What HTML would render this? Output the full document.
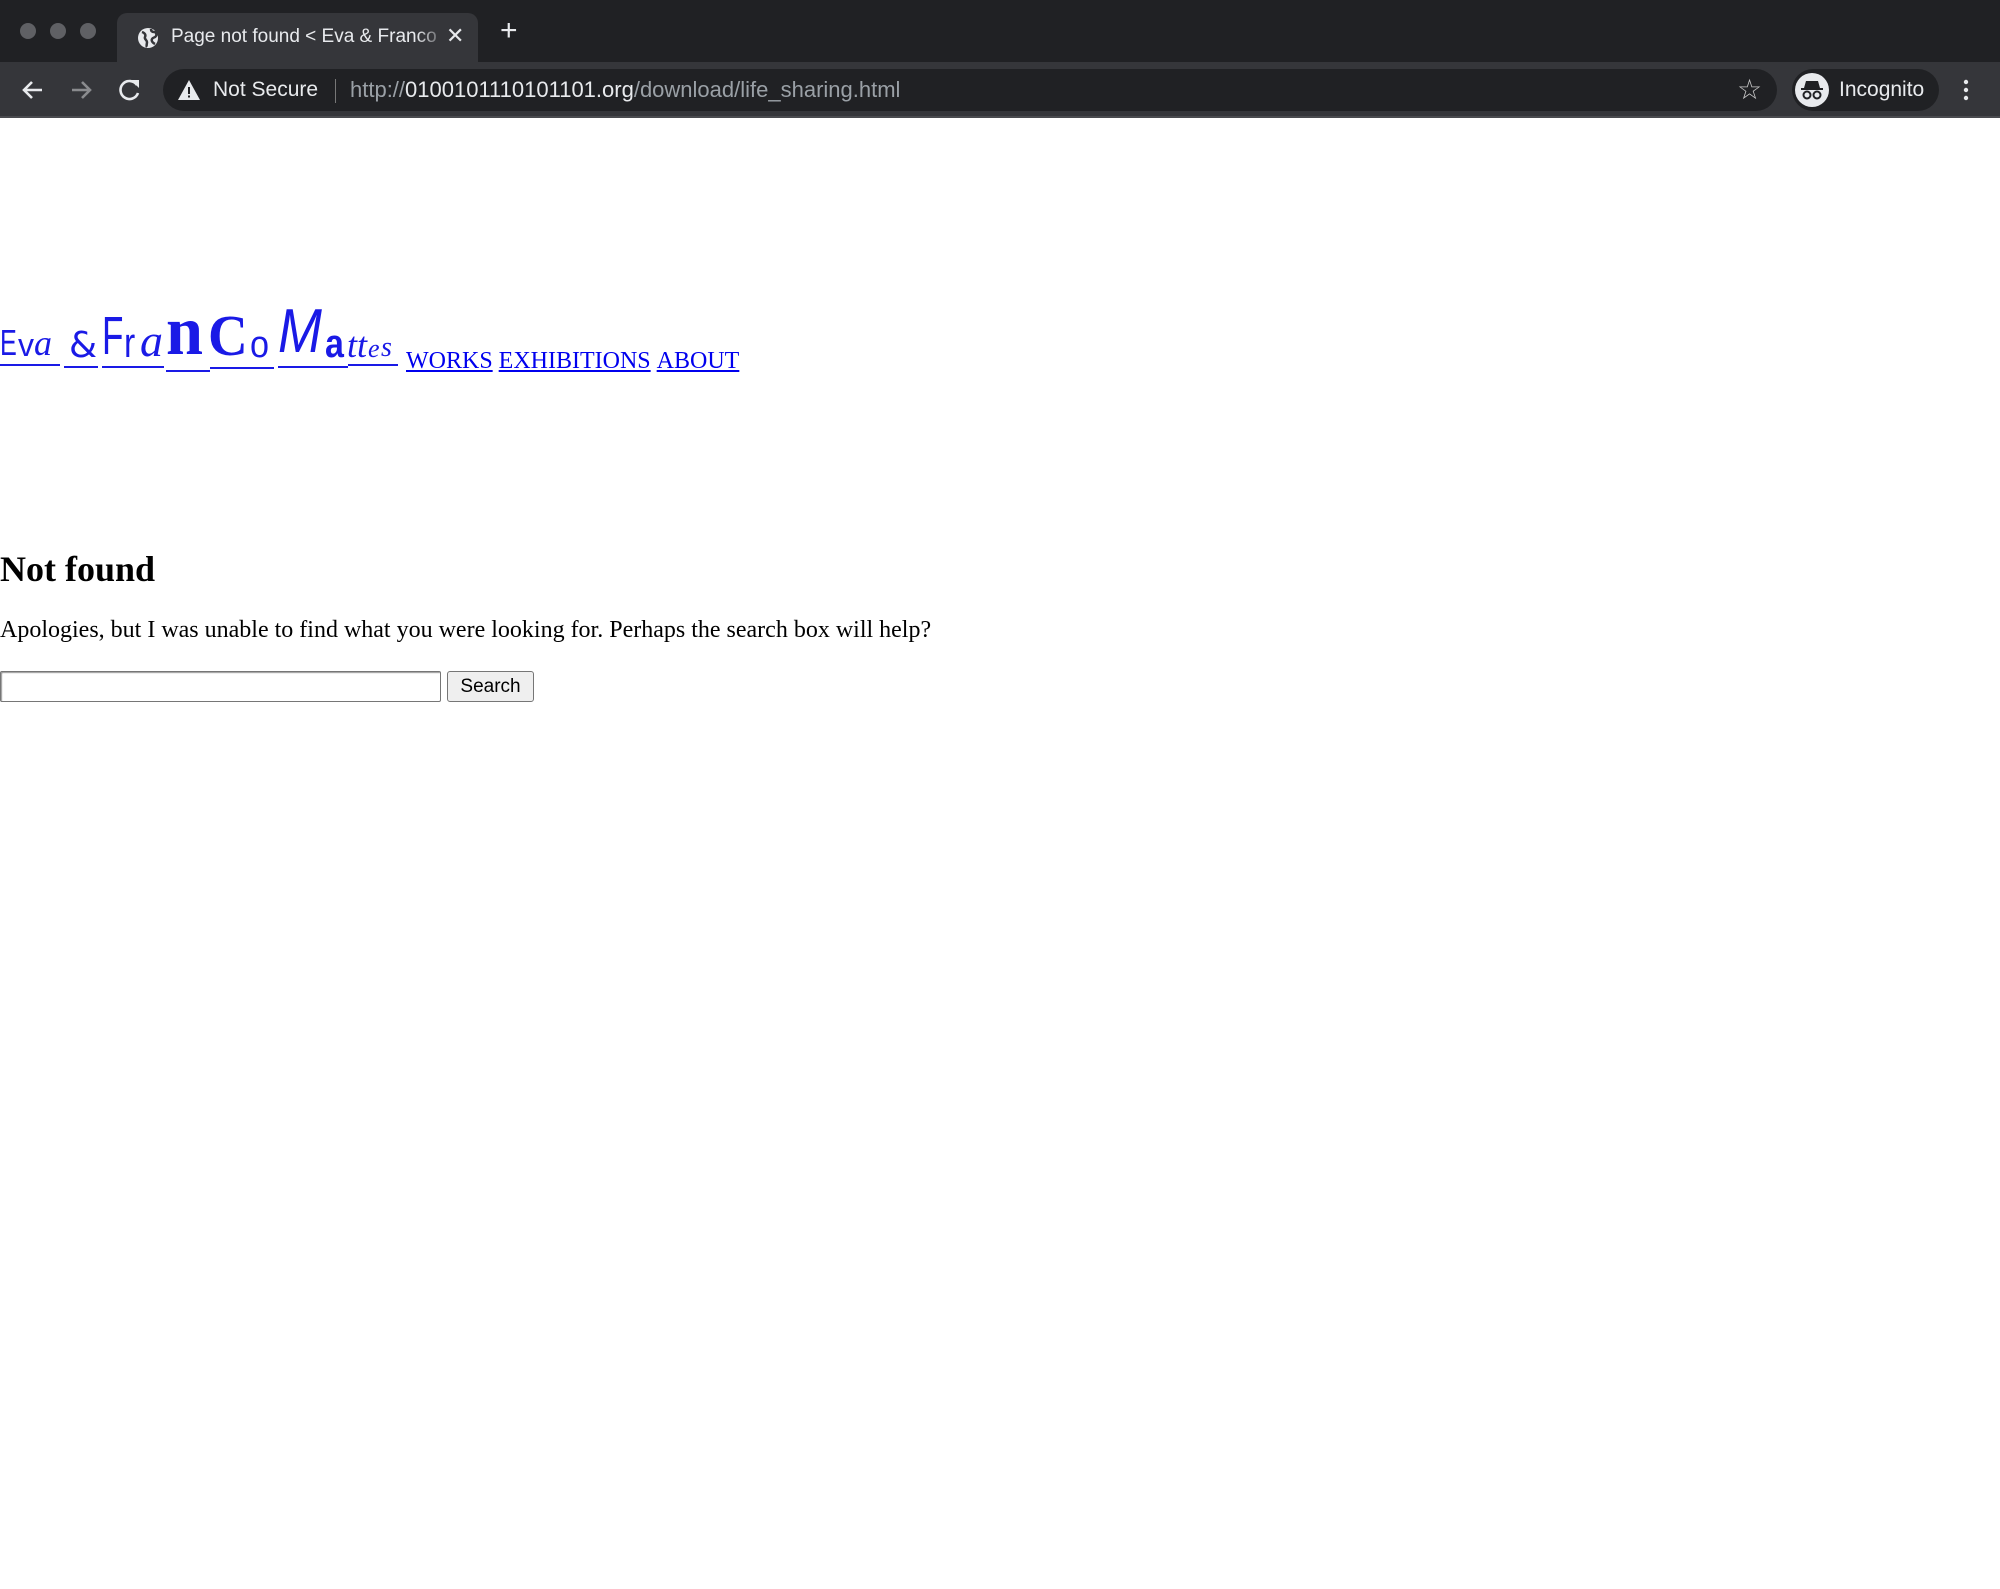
<!DOCTYPE html>
<html><head><meta charset="utf-8"><style>
*{box-sizing:border-box}
body{margin:0;width:2000px;height:1589px;background:#fff;overflow:hidden;font-family:"Liberation Serif",serif;}
.top{position:absolute;left:0;top:0;width:2000px;height:62px;background:#202124}
.tool{position:absolute;left:0;top:62px;width:2000px;height:56px;background:#35363a;border-bottom:2px solid #4a4b4f}
.dot{position:absolute;top:23px;width:16px;height:16px;border-radius:50%;background:#5f6064}
.tab{position:absolute;left:117px;top:13px;width:361px;height:50px;background:#35363a;border-radius:10px 10px 0 0;overflow:hidden}
.tab span{position:absolute;left:54px;top:13px;color:#e8eaed;font:19px "Liberation Sans",sans-serif;white-space:nowrap}
.omni{position:absolute;left:163px;top:7px;width:1614px;height:42px;background:#202124;border-radius:21px}
.ic{position:absolute;color:#e8eaed;font-family:"Liberation Sans",sans-serif}
a{color:#0000ee}
.logo{position:absolute;left:0;top:300px;height:80px;width:400px}
.logo span{position:absolute;bottom:0;line-height:1;color:#1a1ae6;transform-origin:left bottom}
.ul{position:absolute;height:2px;background:#1a1ae6}
.nav{position:absolute;top:348px;left:406px;font-size:24px;white-space:nowrap}
.nav a{margin-right:6px}
h1{position:absolute;left:0;top:548px;margin:0;font-size:36px;font-weight:bold}
p{position:absolute;left:0;top:617px;margin:0;font-size:24px;white-space:nowrap}
.inp{position:absolute;left:0;top:671px;width:441px;height:31px;border:1px solid #767676;border-radius:2px;box-shadow:inset 1px 1px 1px #999}
.btn{position:absolute;left:447px;top:671px;width:87px;height:31px;border:1px solid #767676;border-radius:3px;background:#efefef;font:19px "Liberation Sans",sans-serif;text-align:center;line-height:29px}
</style></head><body>
<div class="top">
<div class="dot" style="left:20px"></div><div class="dot" style="left:50px"></div><div class="dot" style="left:80px"></div>
<div class="tab">
<svg style="position:absolute;left:20px;top:14px" width="22" height="22" viewBox="0 0 22 22"><circle cx="11" cy="11" r="10" fill="#e8eaed"/><path d="M5 5c3 1 4 3 3 5s2 3 2 5-1 4 0 5M14 2c0 2 1 3 3 3s3 2 2 4-3 1-4 3 1 4 3 5" stroke="#35363a" stroke-width="2.5" fill="none"/></svg>
<span>Page not found &lt; Eva &amp; Franco</span>
<div style="position:absolute;left:300px;top:0;width:30px;height:50px;background:linear-gradient(to right,rgba(53,54,58,0),#35363a)"></div>
<span style="left:329px;top:10px;font-size:22px">✕</span>
</div>
<span class="ic" style="left:500px;top:14px;font-size:30px;font-weight:300">+</span>
</div>
<div class="tool">
<svg style="position:absolute;left:20px;top:16px" width="26" height="24" viewBox="0 0 26 24"><path d="M22 12H4M12 4l-8 8 8 8" stroke="#e8eaed" stroke-width="2.6" fill="none"/></svg>
<svg style="position:absolute;left:68px;top:16px" width="26" height="24" viewBox="0 0 26 24"><path d="M4 12h18M14 4l8 8-8 8" stroke="#8a8b8e" stroke-width="2.6" fill="none"/></svg>
<svg style="position:absolute;left:117px;top:15px" width="26" height="26" viewBox="0 0 26 26"><path d="M20 8A9 9 0 1 0 21 16" stroke="#e8eaed" stroke-width="2.6" fill="none"/><path d="M14 3h8v8z" fill="#e8eaed"/></svg>
<div class="omni">
<svg style="position:absolute;left:14px;top:10px" width="24" height="22" viewBox="0 0 24 22"><path d="M12 1L23 21H1z" fill="#e8eaed"/><rect x="11" y="8" width="2" height="7" fill="#202124"/><rect x="11" y="16.5" width="2" height="2" fill="#202124"/></svg>
<span class="ic" style="left:50px;top:9px;font-size:21px">Not Secure</span>
<div style="position:absolute;left:172px;top:10px;width:1px;height:24px;background:#777"></div>
<span class="ic" style="left:187px;top:8px;font-size:22px;color:#9aa0a6;white-space:nowrap">http://<span style="color:#e8eaed">0100101110101101.org</span>/download/life_sharing.html</span>
<span class="ic" style="left:1574px;top:4px;font-size:28px;color:#c8c8c8">☆</span>
</div>
<div style="position:absolute;left:1792px;top:7px;width:147px;height:42px;background:#202124;border-radius:21px">
<div style="position:absolute;left:3px;top:4px;width:34px;height:34px;border-radius:50%;background:#e8eaed"></div>
<svg style="position:absolute;left:8px;top:10px" width="24" height="22" viewBox="0 0 24 22"><path d="M6 2h12l2 7H4z" fill="#202124"/><rect x="1" y="9" width="22" height="2" fill="#202124"/><circle cx="7" cy="16" r="3.5" stroke="#202124" stroke-width="2" fill="none"/><circle cx="17" cy="16" r="3.5" stroke="#202124" stroke-width="2" fill="none"/></svg>
<span class="ic" style="left:47px;top:9px;font-size:21px">Incognito</span>
</div>
<svg style="position:absolute;left:1962px;top:16px" width="8" height="24" viewBox="0 0 8 24"><circle cx="4" cy="4" r="2.2" fill="#e8eaed"/><circle cx="4" cy="12" r="2.2" fill="#e8eaed"/><circle cx="4" cy="20" r="2.2" fill="#e8eaed"/></svg>
</div>

<div class="logo">
<span style="left:0;font:36px 'Liberation Sans',sans-serif;bottom:16px;transform:scaleX(0.7)">E</span>
<span style="left:18px;font:32px 'Liberation Sans',sans-serif;bottom:16px">v</span>
<span style="left:34px;font:italic 36px 'Liberation Serif',serif;bottom:16px">a</span>
<span style="left:69px;font:36px 'DejaVu Sans',sans-serif;bottom:14px">&amp;</span>
<span style="left:102px;font:54px 'Liberation Sans',sans-serif;bottom:13px;transform:scaleX(0.65)">F</span>
<span style="left:124px;font:42px 'Liberation Sans',sans-serif;bottom:13px;transform:scaleX(0.8)">r</span>
<span style="left:140px;font:italic 46px 'Liberation Serif',serif;bottom:13px">a</span>
<span style="left:166px;font:bold 70px 'Liberation Serif',serif;bottom:8px;transform:scaleX(0.95)">n</span>
<span style="left:208px;font:bold 58px 'Liberation Serif',serif;bottom:11px;transform:scaleX(0.95)">C</span>
<span style="left:250px;font:38px 'Liberation Sans',sans-serif;bottom:13px;transform:scaleX(0.9)">o</span>
<span style="left:278px;font:italic 62px 'Liberation Sans',sans-serif;bottom:13px;transform:scaleX(0.85)">M</span>
<span style="left:325px;font:bold 40px 'Liberation Sans',sans-serif;bottom:13px;transform:scaleX(0.85)">a</span>
<span style="left:347px;font:italic 36px 'Liberation Serif',serif;bottom:14px">t</span>
<span style="left:357px;font:italic 36px 'Liberation Serif',serif;bottom:14px">t</span>
<span style="left:368px;font:italic 26px 'Liberation Serif',serif;bottom:16px">e</span>
<span style="left:381px;font:italic 28px 'Liberation Serif',serif;bottom:16px">s</span>
<div class="ul" style="left:0;width:60px;top:64px"></div>
<div class="ul" style="left:64px;width:34px;top:66px"></div>
<div class="ul" style="left:102px;width:62px;top:66px"></div>
<div class="ul" style="left:166px;width:44px;top:70px"></div>
<div class="ul" style="left:210px;width:64px;top:67px"></div>
<div class="ul" style="left:278px;width:70px;top:66px"></div>
<div class="ul" style="left:348px;width:50px;top:64px"></div>
</div>
<div class="nav"><a href="#">WORKS</a><a href="#">EXHIBITIONS</a><a href="#">ABOUT</a></div>

<h1>Not found</h1>
<p>Apologies, but I was unable to find what you were looking for. Perhaps the search box will help?</p>
<div class="inp"></div>
<div class="btn">Search</div>
</body></html>
